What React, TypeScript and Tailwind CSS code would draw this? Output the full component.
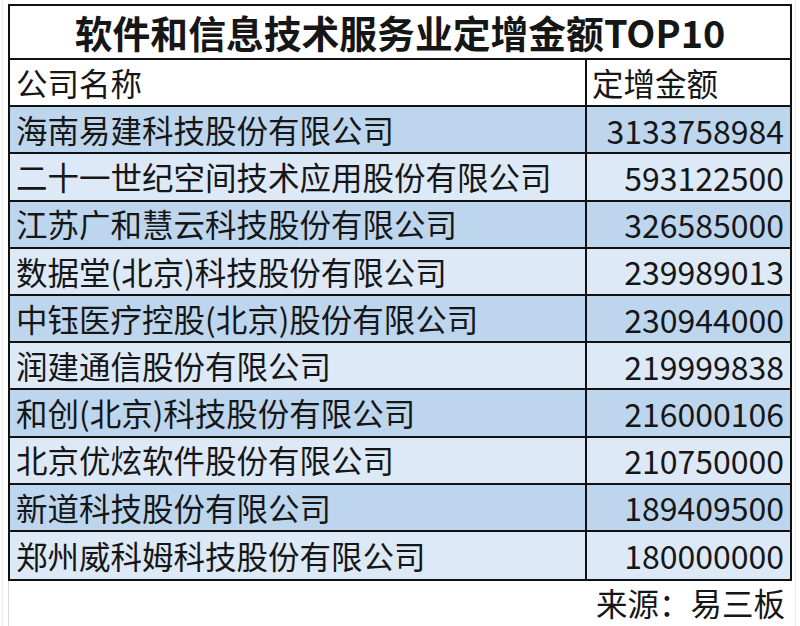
import React from "react";

const rows: [string, string][] = [
  ["海南易建科技股份有限公司", "3133758984"],
  ["二十一世纪空间技术应用股份有限公司", "593122500"],
  ["江苏广和慧云科技股份有限公司", "326585000"],
  ["数据堂(北京)科技股份有限公司", "239989013"],
  ["中钰医疗控股(北京)股份有限公司", "230944000"],
  ["润建通信股份有限公司", "219999838"],
  ["和创(北京)科技股份有限公司", "216000106"],
  ["北京优炫软件股份有限公司", "210750000"],
  ["新道科技股份有限公司", "189409500"],
  ["郑州威科姆科技股份有限公司", "180000000"],
];

const font = { fontFamily: '"Noto Sans CJK SC", "Noto Sans", sans-serif' };

export default function App() {
  return (
    <div
      className="w-[800px] h-[626px] bg-white text-[#161616] overflow-hidden flex"
      style={font}
    >
      <div className="w-[8px] shrink-0 flex justify-start">
        <div className="w-px ml-[2px] h-full bg-[#ececec]" />
      </div>
      <div className="w-[784px] shrink-0 flex flex-col pt-[4px]">
        <div className="border-2 border-[#111] flex flex-col">
          <div className="h-[54px] border-b-2 border-[#111] flex items-center justify-center text-[37.8px] font-bold leading-none">
            软件和信息技术服务业定增金额TOP10
          </div>
          <div className="h-[47.2px] border-b-2 border-[#111] flex text-[31.5px] leading-none">
            <div className="w-[577px] border-r-2 border-[#111] flex items-center pl-[6px]">
              公司名称
            </div>
            <div className="flex-1 flex items-center pl-[5px]">定增金额</div>
          </div>
          {rows.map(([name, amt], i) => (
            <div
              key={name}
              className={`h-[47.2px] flex text-[31.5px] leading-none ${
                i < rows.length - 1 ? "border-b-2 border-[#111]" : ""
              } ${i % 2 === 0 ? "bg-[#bdd6ee]" : "bg-[#dde9f6]"}`}
            >
              <div className="w-[577px] border-r-2 border-[#111] flex items-center pl-[6px]">
                {name}
              </div>
              <div className="flex-1 flex items-center justify-end pr-[6px] text-[32px]">
                {amt}
              </div>
            </div>
          ))}
        </div>
        <div className="flex-1 flex">
          <div className="w-px bg-[#d8d8d8]" />
          <div className="flex-1 flex items-center justify-end pr-[7px] text-[31.5px] leading-none pb-[2px]">
            来源：易三板
          </div>
        </div>
      </div>
      <div className="flex-1 flex justify-end">
        <div className="w-px mr-[4px] h-full bg-[#ececec]" />
      </div>
    </div>
  );
}
